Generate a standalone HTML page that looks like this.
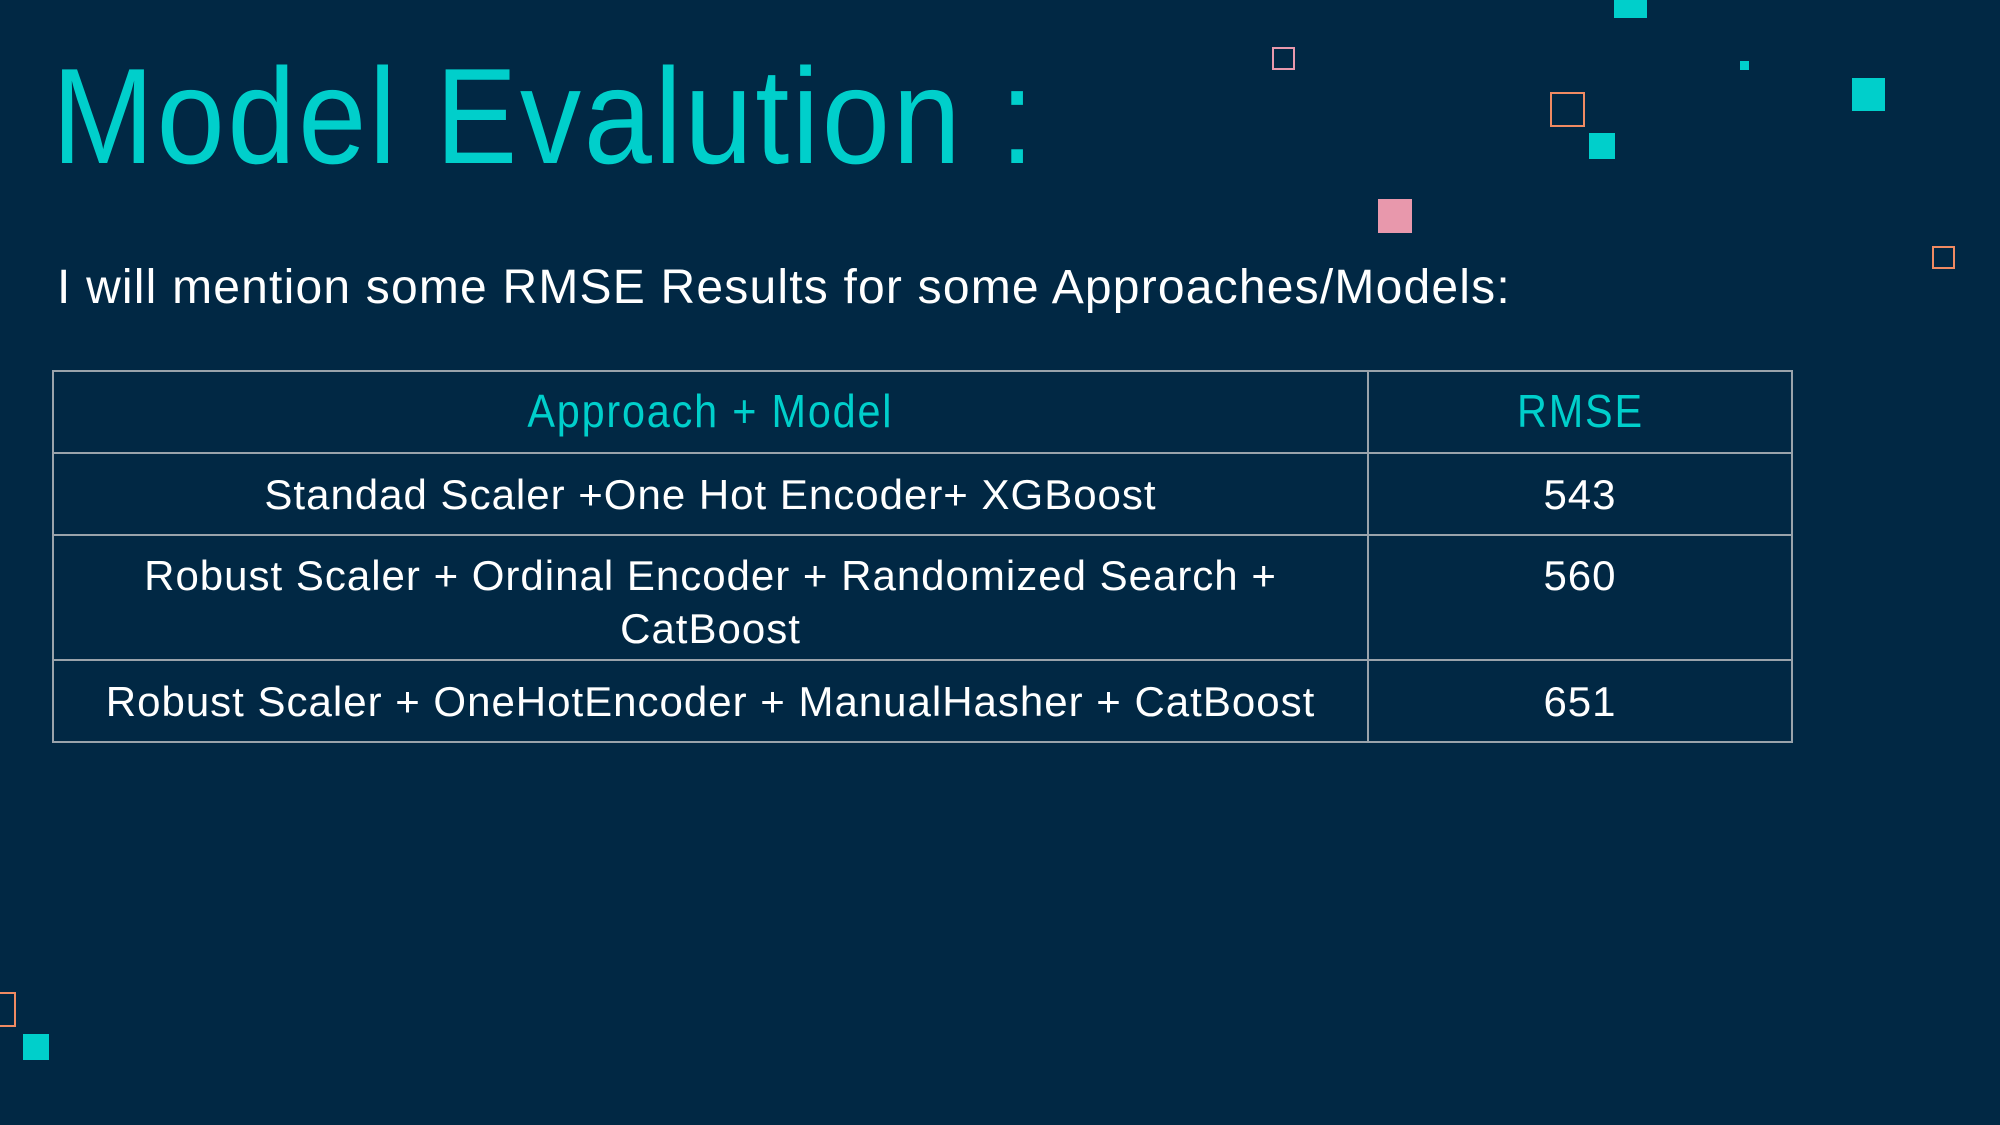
<!DOCTYPE html>
<html><head><meta charset="utf-8"><style>
html,body{margin:0;padding:0}
body{width:2000px;height:1125px;background:#012844;position:relative;overflow:hidden;font-family:"Liberation Sans",sans-serif}
.sq{position:absolute;box-sizing:border-box}
.c{background:#00CFCB}
.p{background:#E898AC}
.ob{border:2px solid #F08A62}
.pb{border:2px solid #E898AC}
h1{position:absolute;left:52px;top:26px;margin:0;font-weight:normal;color:#00CFCB;font-size:136px;line-height:180px;transform:scaleX(0.9);transform-origin:left top;white-space:nowrap;letter-spacing:3px}
.sub{position:absolute;left:57px;top:258px;color:#fff;font-size:48px;line-height:60px;white-space:nowrap;letter-spacing:1.2px}
table{position:absolute;left:52px;top:370px;width:1741px;border-collapse:collapse}
td{border:2px solid #9aa3ab;color:#fff;text-align:center;font-size:42px;letter-spacing:1px;line-height:53px;padding:0;vertical-align:top}
.h td{color:#00CFCB;height:80px;vertical-align:middle}
.h span{display:inline-block;transform:scaleX(0.9);font-size:46px;letter-spacing:2px}
.r1 td{height:80px;vertical-align:middle}
.r2 td{height:125px;padding-top:13px;box-sizing:border-box}
.r3 td{height:80px;vertical-align:middle}
</style></head><body>
<div class="sq c" style="left:1614px;top:0;width:33px;height:18px"></div>
<div class="sq pb" style="left:1272px;top:47px;width:23px;height:23px"></div>
<div class="sq c" style="left:1740px;top:61px;width:9px;height:9px"></div>
<div class="sq c" style="left:1852px;top:78px;width:33px;height:33px"></div>
<div class="sq ob" style="left:1550px;top:92px;width:35px;height:35px"></div>
<div class="sq c" style="left:1589px;top:133px;width:26px;height:26px"></div>
<div class="sq p" style="left:1378px;top:199px;width:34px;height:34px"></div>
<div class="sq ob" style="left:1932px;top:246px;width:23px;height:23px"></div>
<div class="sq ob" style="left:-18px;top:992px;width:34px;height:35px"></div>
<div class="sq c" style="left:23px;top:1034px;width:26px;height:26px"></div>
<h1>Model Evalution :</h1>
<div class="sub">I will mention some RMSE Results for some Approaches/Models:</div>
<table>
<tr class="h"><td style="width:1313px"><span>Approach + Model</span></td><td><span>RMSE</span></td></tr>
<tr class="r1"><td>Standad Scaler +One Hot Encoder+ XGBoost</td><td>543</td></tr>
<tr class="r2"><td>Robust Scaler + Ordinal Encoder + Randomized Search +<br>CatBoost</td><td>560</td></tr>
<tr class="r3"><td>Robust Scaler + OneHotEncoder + ManualHasher + CatBoost</td><td>651</td></tr>
</table>
</body></html>
